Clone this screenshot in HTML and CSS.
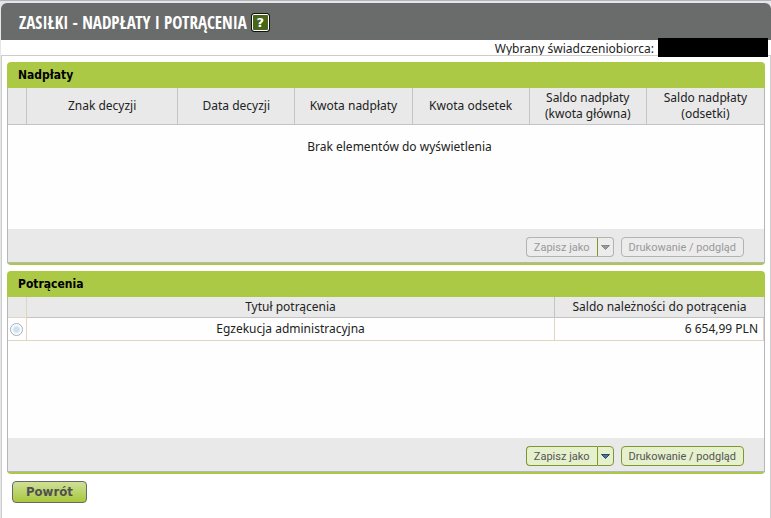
FILE: index.html
```html
<!DOCTYPE html>
<html lang="pl" dir="ltr">

<head>
  <meta charset="utf-8">
  <title>Zasiłki - nadpłaty i potrącenia</title>
  <link rel="stylesheet" href="styles.css">
</head>

<body>
  <header class="top">
    <h1>ZASIŁKI - NADPŁATY I POTRĄCENIA</h1>
    <button class="help" type="button">?</button>
  </header>
  <div class="person">
    <span>Wybrany świadczeniobiorca:</span>
    <span class="hidden-name"></span>
  </div>
  <main class="content">
    <section class="panel">
      <h2>Nadpłaty</h2>
      <div class="panel-body">
        <table class="overpaid">
          <thead>
            <tr>
              <th class="pick"></th>
              <th class="sign">Znak decyzji</th>
              <th>Data decyzji</th>
              <th>Kwota nadpłaty</th>
              <th>Kwota odsetek</th>
              <th>Saldo nadpłaty (kwota główna)</th>
              <th>Saldo nadpłaty<br>(odsetki)</th>
            </tr>
          </thead>
        </table>
        <p class="empty">Brak elementów do wyświetlenia</p>
      </div>
      <div class="panel-foot">
        <div class="split">
          <button type="button" disabled>Zapisz jako</button>
          <button class="arrow" type="button" aria-label="Wybierz format" disabled>
            <svg width="9" height="5" viewBox="0 0 9 5"><path d="M0.500 0.500h8L4.500 4.500z"/></svg>
          </button>
        </div>
        <button class="small" type="button" disabled>Drukowanie / podgląd</button>
      </div>
    </section>

    <section class="panel">
      <h2>Potrącenia</h2>
      <div class="panel-body">
        <table class="deductions">
          <thead>
            <tr>
              <th class="pick"></th>
              <th>Tytuł potrącenia</th>
              <th class="saldo">Saldo należności do potrącenia</th>
            </tr>
          </thead>
          <tbody>
            <tr>
              <td class="pick"><input type="radio" name="deduction" aria-label="Egzekucja administracyjna"></td>
              <td>Egzekucja administracyjna</td>
              <td class="amount">6 654,99 PLN</td>
            </tr>
          </tbody>
        </table>
      </div>
      <div class="panel-foot">
        <div class="split">
          <button type="button">Zapisz jako</button>
          <button class="arrow" type="button" aria-label="Wybierz format">
            <svg width="9" height="5" viewBox="0 0 9 5"><path d="M0.500 0.500h8L4.500 4.500z"/></svg>
          </button>
        </div>
        <button class="small" type="button">Drukowanie / podgląd</button>
      </div>
    </section>

    <button class="back" type="button">Powrót</button>
  </main>
</body>

</html>
```

FILE: styles.css
```css
* {
  box-sizing: border-box;
}

body {
  margin: 0;
  padding: 2px 0 0 1px;
  min-height: 100vh;
  display: flex;
  flex-direction: column;
  border-top: 1px solid #b4b4bc;
  background-color: #e6e6e8;
  color: #222;
  font-family: "Noto Sans", "DejaVu Sans", sans-serif;
  font-size: 12px;
  line-height: 16px;
}

button {
  font-family: inherit;
  cursor: pointer;
}

.top {
  display: flex;
  align-items: center;
  gap: 4px;
  height: 37px;
  padding: 2px 18px 0;
  border-radius: 6px 6px 0 0;
  background-color: #6a6c6b;
}

.top h1 {
  margin: 0;
  color: #fff;
  font-family: "Open Sans Condensed", "Liberation Sans Narrow", sans-serif;
  font-size: 17px;
  line-height: 24px;
  font-weight: bold;
}

.help {
  width: 19px;
  height: 19px;
  padding: 0;
  border: 1px solid #111;
  border-radius: 3px;
  background-color: #47661a;
  box-shadow: inset 0 0 0 1px #fff;
  color: #fff;
  font-family: "DejaVu Sans", sans-serif;
  font-size: 13px;
  line-height: 17px;
  font-weight: bold;
}

.person {
  display: flex;
  justify-content: flex-end;
  height: 15px;
  padding-right: 3px;
  gap: 4px;
  line-height: 17px;
  background-color: #fff;
}

.hidden-name {
  position: relative;
  width: 110px;
  height: 19px;
  margin-top: -2px;
  background-color: #000;
}

.content {
  flex: 1;
  padding: 6px 5px;
  border: solid #ccc;
  border-width: 1px 1px 0;
  background-color: #fff;
}

.panel {
  margin-bottom: 6px;
  border-bottom: 2px solid #abc945;
  border-radius: 4px;
}

.panel h2 {
  margin: 0;
  padding: 5px 11px;
  border-radius: 4px 4px 0 0;
  background-color: #abc945;
  color: #000;
  font-family: "DejaVu Sans Condensed", "DejaVu Sans", sans-serif;
  font-size: 12px;
  line-height: 16px;
}

.panel-body {
  height: 141px;
  border: solid #b5b5be;
  border-width: 0 1px;
  background-color: #fefefe;
}

table {
  width: 100%;
  table-layout: fixed;
  border-collapse: separate;
  border-spacing: 0;
}

th,
td {
  padding: 2px 5px;
  border: solid #c4c4c4;
  border-width: 0 1px 1px 0;
  text-align: center;
  font-weight: normal;
}

th {
  background-color: #e9e9e9;
}

th:last-child {
  border-right: none;
}

.overpaid th {
  height: 37px;
}

.deductions th {
  height: 21px;
}

.deductions td {
  height: 23px;
  border-color: #e2d5c0;
}

.deductions .pick {
  border-color: #e2d5c0;
}

th.pick,
td.pick {
  width: 19px;
  padding: 0;
}

.sign {
  width: 20%;
}

.saldo {
  width: 209px;
}

.deductions .amount {
  text-align: right;
}

input[type="radio"] {
  appearance: none;
  display: block;
  width: 13px;
  height: 13px;
  margin: 0 2px;
  border: 1px solid #a5b0ba;
  border-radius: 50%;
  background: radial-gradient(#cfe0ee 30%, #fff 60%);
}

.empty {
  margin: 14px 0 0;
  padding-left: 27px;
  text-align: center;
}

.panel-foot {
  display: flex;
  justify-content: flex-end;
  gap: 7px;
  padding: 8px 20px 5px;
  border: solid #b5b5be;
  border-width: 0 1px 1px;
  background-color: #e9e9e9;
}

.split {
  display: flex;
}

.split button,
.small {
  height: 20px;
  padding: 1px 7px 0;
  border: 1px solid #80972f;
  border-radius: 4px;
  background-color: #e5f0cd;
  color: #555;
  font-family: Roboto, "Liberation Sans", sans-serif;
  font-size: 11px;
  line-height: 17px;
}

.split button:first-child {
  border-right: none;
  border-radius: 4px 0 0 4px;
}

.split .arrow {
  display: flex;
  align-items: center;
  padding: 0 3px;
  border-radius: 0 4px 4px 0;
}

.arrow path {
  fill: #4279b0;
  stroke: #345;
}

.split button:disabled,
.small:disabled {
  border-color: #b3b3b3;
  background-color: #ececec;
  color: #999;
  cursor: default;
}

.split .arrow:disabled {
  border-left-color: #80972f;
}

.arrow:disabled path {
  fill: #999;
  stroke: #888;
}

.back {
  display: block;
  margin: 7px 5px 0;
  height: 22px;
  padding: 0 13px;
  border: 1px solid #686868;
  border-radius: 4px;
  background: linear-gradient(#cfdf98, #a8c83c);
  color: #505050;
  font-family: "DejaVu Sans Condensed", "DejaVu Sans", sans-serif;
  font-size: 13px;
  line-height: 20px;
  font-weight: bold;
}
```
